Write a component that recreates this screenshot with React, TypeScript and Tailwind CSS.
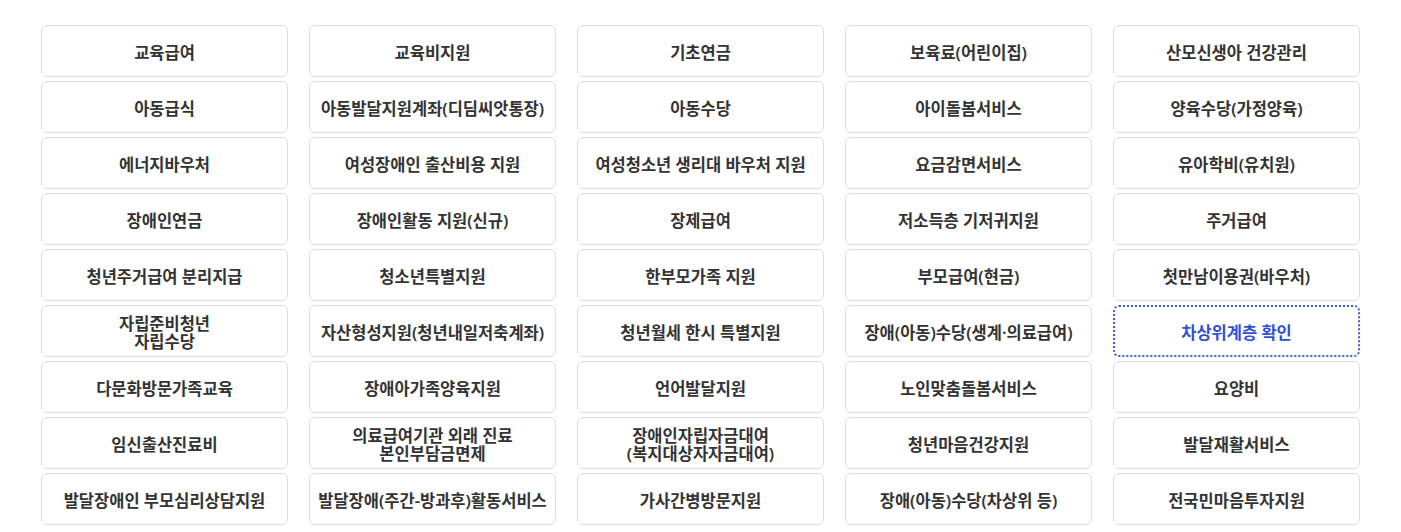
import React from 'react';

const items: string[] = [
  '교육급여',
  '교육비지원',
  '기초연금',
  '보육료(어린이집)',
  '산모신생아 건강관리',
  '아동급식',
  '아동발달지원계좌(디딤씨앗통장)',
  '아동수당',
  '아이돌봄서비스',
  '양육수당(가정양육)',
  '에너지바우처',
  '여성장애인 출산비용 지원',
  '여성청소년 생리대 바우처 지원',
  '요금감면서비스',
  '유아학비(유치원)',
  '장애인연금',
  '장애인활동 지원(신규)',
  '장제급여',
  '저소득층 기저귀지원',
  '주거급여',
  '청년주거급여 분리지급',
  '청소년특별지원',
  '한부모가족 지원',
  '부모급여(현금)',
  '첫만남이용권(바우처)',
  '자립준비청년\n자립수당',
  '자산형성지원(청년내일저축계좌)',
  '청년월세 한시 특별지원',
  '장애(아동)수당(생계·의료급여)',
  '차상위계층 확인',
  '다문화방문가족교육',
  '장애아가족양육지원',
  '언어발달지원',
  '노인맞춤돌봄서비스',
  '요양비',
  '임신출산진료비',
  '의료급여기관 외래 진료\n본인부담금면제',
  '장애인자립자금대여\n(복지대상자자금대여)',
  '청년마음건강지원',
  '발달재활서비스',
  '발달장애인 부모심리상담지원',
  '발달장애(주간-방과후)활동서비스',
  '가사간병방문지원',
  '장애(아동)수당(차상위 등)',
  '전국민마음투자지원',
];

export default function App() {
  const active = '차상위계층 확인';

  return (
    <div
      className="w-full bg-white px-[41px] pt-[25px] pb-[7px]"
      style={{ fontFamily: '"Noto Sans", "Noto Sans CJK KR", sans-serif' }}
    >
      <ul className="grid grid-cols-5 gap-x-[21px] gap-y-[4px]">
        {items.map((label) => {
          const isActive = label === active;
          return (
            <li key={label}>
              <button
                type="button"
                className={
                  isActive
                    ? 'flex h-[52px] w-full items-center justify-center whitespace-pre-line rounded-[6px] border-2 border-dotted border-[#3d5ce0] pt-[3px] text-center text-[16.5px] font-semibold leading-[18px] text-[#2f4fd6]'
                    : 'flex h-[52px] w-full items-center justify-center whitespace-pre-line rounded-[6px] border border-[#dcdcdc] pt-[3px] text-center text-[16.5px] font-semibold leading-[18px] text-[#333]'
                }
              >
                {label}
              </button>
            </li>
          );
        })}
      </ul>
    </div>
  );
}
